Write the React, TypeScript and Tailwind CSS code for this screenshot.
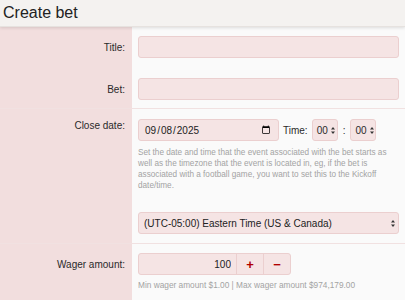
import React, { useState } from 'react';

const UpDown: React.FC = () => (
  <svg width="4" height="7" viewBox="0 0 4 7" className="block">
    <path d="M2 0L4 2.6H0z M2 7L0 4.4h4z" fill="#333" />
  </svg>
);

const inputCls =
  'block h-[22px] w-full rounded-[3px] border border-[#ebcfcf] bg-[#f5e4e4] px-[5px] text-[10px] text-[#222] outline-none';

const App: React.FC = () => {
  const [title, setTitle] = useState('');
  const [bet, setBet] = useState('');
  const [closeDate, setCloseDate] = useState('2025-09-08');
  const [wager, setWager] = useState(100);

  return (
    <div className="min-h-[300px] bg-[#fafafa] font-['Liberation_Sans',Arial,sans-serif] text-[#2a2a2a]">
      <div className="relative z-10 flex h-[27px] items-center border-b border-[#e6e2df] bg-[#f4f2f0] px-[3px] shadow-[0_1px_3px_rgba(0,0,0,0.12)]">
        <h1 className="text-[16px] leading-none text-[#222]">Create bet</h1>
      </div>

      {/* Title */}
      <div className="grid grid-cols-[132px_1fr] text-[10px]">
        <div className="flex justify-end bg-[#f2dede] pr-[7px] pt-[9px] pb-[9px]">
          <label className="flex h-[22px] items-center">Title:</label>
        </div>
        <div className="px-[6px] pt-[9px] pb-[9px]">
          <input className={inputCls} value={title} onChange={(e) => setTitle(e.target.value)} />
        </div>
      </div>

      {/* Bet */}
      <div className="grid grid-cols-[132px_1fr] border-b border-[#f1e1e1] text-[10px]">
        <div className="flex justify-end bg-[#f2dede] pr-[7px] pt-[11px] pb-[8px]">
          <label className="flex h-[22px] items-center">Bet:</label>
        </div>
        <div className="px-[6px] pt-[11px] pb-[8px]">
          <input className={inputCls} value={bet} onChange={(e) => setBet(e.target.value)} />
        </div>
      </div>

      {/* Close date */}
      <div className="grid grid-cols-[132px_1fr] border-b border-[#f1e1e1] text-[10px]">
        <div className="flex justify-end bg-[#f2dede] pr-[7px] pt-[10px]">
          <label className="pt-[2px] leading-none">Close date:</label>
        </div>
        <div className="px-[6px] pt-[10px] pb-[9px]">
          <div className="flex h-[22px] items-center">
            <input
              type="date"
              value={closeDate}
              onChange={(e) => setCloseDate(e.target.value)}
              className="block h-[22px] w-[141px] rounded-[3px] border border-[#ebcfcf] bg-[#f5e4e4] px-[5px] text-[10px] text-[#222] outline-none"
            />
            <span className="ml-[4px] mr-[4px]">Time:</span>
            <div className="flex h-[22px] w-[26px] items-center gap-[3px] rounded-[3px] border border-[#ebcfcf] bg-[#f5e4e4] pl-[4px]">
              <span>00</span>
              <UpDown />
            </div>
            <span className="mx-[5px]">:</span>
            <div className="flex h-[22px] w-[26px] items-center gap-[3px] rounded-[3px] border border-[#ebcfcf] bg-[#f5e4e4] pl-[4px]">
              <span>00</span>
              <UpDown />
            </div>
          </div>
          <p className="mt-[6px] text-[8.2px] leading-[11px] text-[#a3a3a3]">
            Set the date and time that the event associated with the bet starts as well as the timezone that the event is located in, eg, if the bet is associated with a football game, you want to set this to the Kickoff date/time.
          </p>
          <div className="mt-[21px] flex h-[22px] items-center justify-between rounded-[3px] border border-[#ebcfcf] bg-[#f5e4e4] pl-[5px] pr-[3px] text-[#222]">
            <span>(UTC-05:00) Eastern Time (US &amp; Canada)</span>
            <UpDown />
          </div>
        </div>
      </div>

      {/* Wager */}
      <div className="grid grid-cols-[132px_1fr] text-[10px]">
        <div className="flex justify-end bg-[#f2dede] pr-[7px] pt-[9px] pb-[10px]">
          <label className="flex h-[22px] items-center">Wager amount:</label>
        </div>
        <div className="px-[6px] pt-[9px] pb-[10px]">
          <div className="flex h-[22px] w-[153px] overflow-hidden rounded-[3px] border border-[#ebcfcf] bg-[#f5e4e4]">
            <input
              value={wager}
              onChange={(e) => setWager(Number(e.target.value) || 0)}
              className="block w-[97px] bg-transparent pr-[5px] text-right text-[10px] text-[#222] outline-none"
            />
            <button
              onClick={() => setWager(wager + 1)}
              className="flex w-[28px] items-center justify-center border-l border-[#ebcfcf] text-[13px] font-bold leading-none text-[#b00000]"
            >
              +
            </button>
            <button
              onClick={() => setWager(Math.max(0, wager - 1))}
              className="flex w-[28px] items-center justify-center border-l border-[#ebcfcf] text-[13px] font-bold leading-none text-[#b00000]"
            >
              −
            </button>
          </div>
          <p className="mt-[5px] text-[8.3px] leading-[11px] text-[#a3a3a3]">
            Min wager amount $1.00 | Max wager amount $974,179.00
          </p>
        </div>
      </div>
    </div>
  );
};

export default App;
